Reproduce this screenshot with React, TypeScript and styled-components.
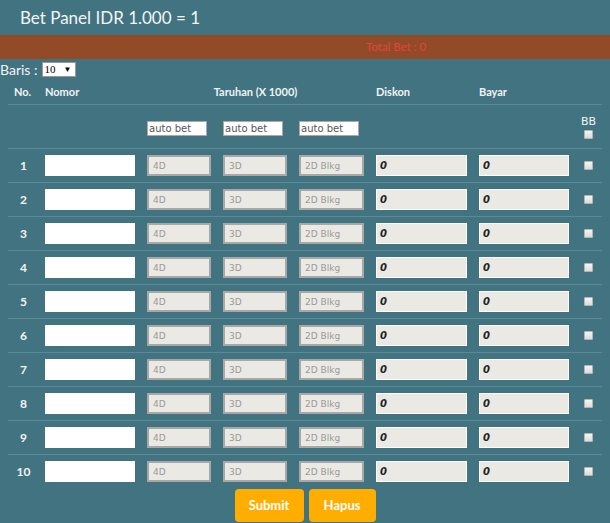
import styled, {createGlobalStyle} from "styled-components";

const GlobalStyle = createGlobalStyle`
    body {
        margin: 0;
        background-color: #427381;
        font-family: Lato, "Noto Sans", sans-serif;
        color: #f2f4f5;
    }
`

const StyledTitleDiv = styled.div`
    height: 35px;
    line-height: 35px;
    padding-left: 20px;
    font-size: 17px;
    color: #f3f5f6;
`

const StyledTotalBarDiv = styled.div`
    height: 24px;
    line-height: 24px;
    background-color: #934a27;
    color: #e0463c;
    font-size: 11.5px;
    padding-left: 366px;
`

const StyledBarisDiv = styled.div`
    display: flex;
    align-items: center;
    gap: 4px;
    height: 20px;
    font-size: 14px;
`

const StyledSelectWrap = styled.span`
    position: relative;
    display: inline-block;
    width: 34px;
    height: 15px;
`

const StyledSelect = styled.select`
    appearance: none;
    box-sizing: border-box;
    width: 100%;
    height: 100%;
    padding: 0 0 0 2px;
    font-family: "Liberation Serif", serif;
    font-size: 11px;
    border: 1px solid #999;
    background: #fff;
    border-radius: 0;
    color: #000;
    display: block;
`

const StyledSelectArrow = styled.span`
    position: absolute;
    right: 4px;
    top: 1px;
    font-size: 8px;
    line-height: 12px;
    color: #000;
    pointer-events: none;
`

const StyledTable = styled.table`
    margin: 0 8px;
    width: 594px;
    table-layout: fixed;
    border-collapse: collapse;

    & td, & th {
        padding: 0 6px;
        vertical-align: middle;
    }
`

const StyledHeadTh = styled.th<{ $align?: string }>`
    height: 25px;
    font-size: 11px;
    font-weight: bold;
    text-align: ${p => p.$align || "left"};
    color: #f0f3f4;
`

const StyledRow = styled.tr<{ $height: number }>`
    height: ${p => p.$height}px;
    border-top: 1px solid #5a8a97;
`

const StyledNoTd = styled.td`
    text-align: center;
    font-size: 12px;
    font-weight: bold;
`

const StyledBBTd = styled.td`
    text-align: center;
    font-family: "DejaVu Sans", sans-serif;
    font-size: 11px;
    line-height: 12px;
    padding: 2px 0 0 !important;

    & > input {
        margin-top: 2px;
    }
`

const StyledNomorInput = styled.input`
    box-sizing: border-box;
    width: 90px;
    height: 21px;
    border: none;
    background: #fff;
    display: block;
`

const StyledAutoInput = styled.input`
    box-sizing: border-box;
    width: 60px;
    height: 15px;
    margin-top: 3px;
    border: 1px solid #a9a9a9;
    padding: 0 1px;
    font-family: "DejaVu Sans", sans-serif;
    font-size: 10px;
    color: #555;
    background: #fff;
    display: block;
`

const StyledBetInput = styled.input`
    box-sizing: border-box;
    width: 100%;
    height: 21px;
    border: 2px solid #a8a8a8;
    background: #ebe9e3;
    padding: 0 4px;
    font-family: "DejaVu Sans", sans-serif;
    font-size: 9px;
    display: block;

    &::placeholder {
        color: #9a9a9a;
    }
`

const StyledMoneyInput = styled.input`
    box-sizing: border-box;
    width: 100%;
    height: 21px;
    border: 1px solid #fff;
    background: #ebe9e3;
    padding: 0 3px;
    font-family: "DejaVu Sans", sans-serif;
    font-size: 10px;
    font-weight: bold;
    font-style: italic;
    color: #222;
    display: block;
`

const StyledCheckbox = styled.input`
    appearance: none;
    width: 9px;
    height: 9px;
    margin: 0 auto;
    border: 1px solid #b5b5b5;
    border-radius: 1px;
    background: linear-gradient(#f4f4f4, #dcdcdc);
    display: block;
`

const StyledButtonRow = styled.div`
    display: flex;
    justify-content: center;
    gap: 5px;
`

const StyledButton = styled.button<{ $width: number }>`
    width: ${p => p.$width}px;
    height: 33px;
    border: none;
    border-radius: 4px;
    background-color: #ffae00;
    color: #fff;
    font-family: Lato, "Noto Sans", sans-serif;
    font-size: 13px;
    font-weight: bold;
`

const rows = [1, 2, 3, 4, 5, 6, 7, 8, 9, 10]

export default function App() {
    return <>
        <GlobalStyle/>
        <StyledTitleDiv>Bet Panel IDR 1.000 = 1</StyledTitleDiv>
        <StyledTotalBarDiv>Total Bet : 0</StyledTotalBarDiv>
        <StyledBarisDiv>
            Baris :
            <StyledSelectWrap>
                <StyledSelect defaultValue="10">
                    <option>10</option>
                </StyledSelect>
                <StyledSelectArrow>▼</StyledSelectArrow>
            </StyledSelectWrap>
        </StyledBarisDiv>
        <StyledTable>
            <colgroup>
                <col style={{width: 31}}/>
                <col style={{width: 102}}/>
                <col style={{width: 76}}/>
                <col style={{width: 76}}/>
                <col style={{width: 77}}/>
                <col style={{width: 103}}/>
                <col style={{width: 102}}/>
                <col style={{width: 27}}/>
            </colgroup>
            <thead>
            <tr>
                <StyledHeadTh>No.</StyledHeadTh>
                <StyledHeadTh>Nomor</StyledHeadTh>
                <StyledHeadTh colSpan={3} $align="center">Taruhan (X 1000)</StyledHeadTh>
                <StyledHeadTh>Diskon</StyledHeadTh>
                <StyledHeadTh>Bayar</StyledHeadTh>
                <StyledHeadTh/>
            </tr>
            </thead>
            <tbody>
            <StyledRow $height={44}>
                <td/>
                <td/>
                <td><StyledAutoInput defaultValue="auto bet"/></td>
                <td><StyledAutoInput defaultValue="auto bet"/></td>
                <td><StyledAutoInput defaultValue="auto bet"/></td>
                <td/>
                <td/>
                <StyledBBTd>BB<StyledCheckbox type="checkbox"/></StyledBBTd>
            </StyledRow>
            {
                rows.map(n => <StyledRow $height={34} key={n}>
                    <StyledNoTd>{n}</StyledNoTd>
                    <td><StyledNomorInput/></td>
                    <td><StyledBetInput placeholder="4D"/></td>
                    <td><StyledBetInput placeholder="3D"/></td>
                    <td><StyledBetInput placeholder="2D Blkg"/></td>
                    <td><StyledMoneyInput defaultValue="0"/></td>
                    <td><StyledMoneyInput defaultValue="0"/></td>
                    <td><StyledCheckbox type="checkbox"/></td>
                </StyledRow>)
            }
            </tbody>
        </StyledTable>
        <StyledButtonRow>
            <StyledButton $width={69}>Submit</StyledButton>
            <StyledButton $width={67}>Hapus</StyledButton>
        </StyledButtonRow>
    </>
}
